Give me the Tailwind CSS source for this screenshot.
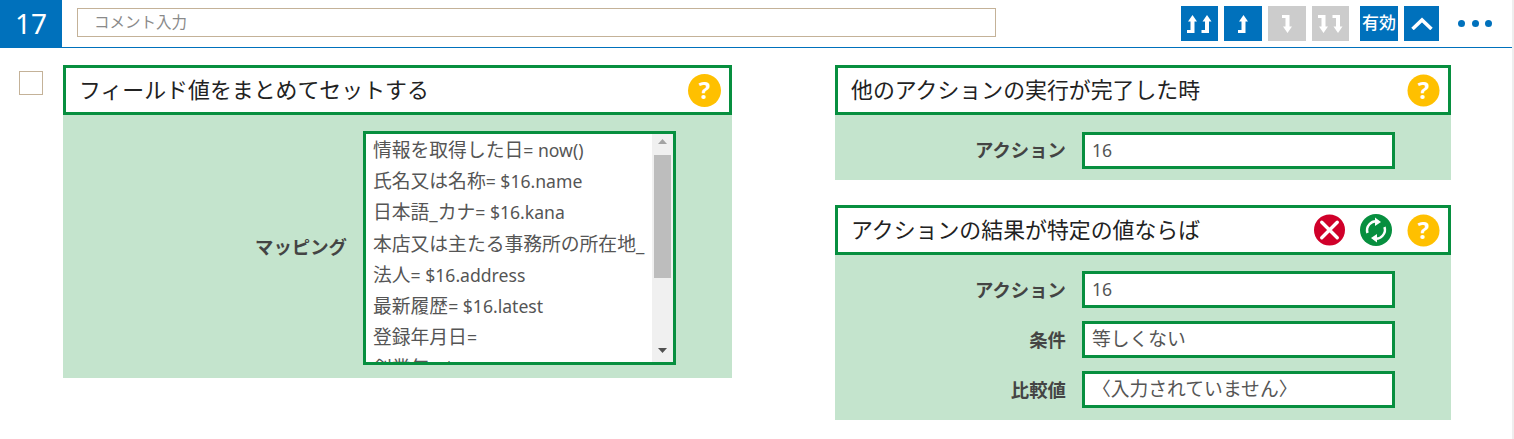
<!DOCTYPE html>
<html lang="ja">
<head>
<meta charset="utf-8">
<script src="https://cdn.jsdelivr.net/npm/@tailwindcss/browser@4"></script>
</head>
<body class="bg-white font-['Noto_Sans','Noto_Sans_CJK_JP',sans-serif] text-[#444] overflow-hidden">
<div class="w-[1514px] h-[439px] border-r-2 border-[#eeeeee]">
  <header class="flex items-start h-[48px] border-b border-[#0071bc]">
    <div class="w-[62px] h-[48px] bg-[#0071bc] text-white text-[28px] leading-[46px] text-center">17</div>
    <div class="mt-[8px] ml-[15px] w-[919px] h-[29px] border border-[#c4b298] pl-4 flex items-center text-[15.500px] text-[#8a8a8a]">コメント入力</div>
    <div class="mt-[6px] ml-[185px] flex items-center gap-[6px]">
      <button class="w-[37px] h-[35px] bg-[#0071bc] flex items-center justify-center">
        <svg width="25" height="18" viewBox="0 0 25 18" fill="white"><path d="M5.500 0 L10 6.500 H7.500 V18 H0 V15 H3.500 V6.500 H1 Z"/><path d="M20 0 L24.500 6.500 H22 V18 H14.500 V15 H18 V6.500 H15.500 Z"/></svg>
      </button>
      <button class="w-[38px] h-[35px] bg-[#0071bc] flex items-center justify-center">
        <svg width="10" height="18" viewBox="0 0 10 18" fill="white"><path d="M5.500 0 L10 6.500 H7.500 V18 H0 V15 H3.500 V6.500 H1 Z"/></svg>
      </button>
      <button class="w-[38px] h-[35px] bg-[#cccccc] flex items-center justify-center">
        <svg width="10" height="18" viewBox="0 0 10 18" fill="white"><path d="M5.500 18 L10 11.500 H7.500 V0 H0 V3 H3.500 V11.500 H1 Z"/></svg>
      </button>
      <button class="w-[37px] h-[35px] bg-[#cccccc] flex items-center justify-center">
        <svg width="25" height="18" viewBox="0 0 25 18" fill="white"><path d="M5.500 18 L10 11.500 H7.500 V0 H0 V3 H3.500 V11.500 H1 Z"/><path d="M20 18 L24.500 11.500 H22 V0 H14.500 V3 H18 V11.500 H15.500 Z"/></svg>
      </button>
      <button class="ml-[5px] w-[38px] h-[35px] pb-[1px] bg-[#0071bc] text-white text-[17px] font-medium text-center whitespace-nowrap">有効</button>
      <button class="w-[35px] h-[35px] bg-[#0071bc] flex items-center justify-center">
        <svg width="22" height="13" viewBox="0 0 22 13" fill="none" stroke="white" stroke-width="3.500"><path d="M1.500 12 L11 3 L20.500 12"/></svg>
      </button>
      <div class="ml-[19px] -translate-x-[6px] flex gap-[6.500px]">
        <span class="w-[7px] h-[7px] rounded-full bg-[#0071bc]"></span>
        <span class="w-[7px] h-[7px] rounded-full bg-[#0071bc]"></span>
        <span class="w-[7px] h-[7px] rounded-full bg-[#0071bc]"></span>
      </div>
    </div>
  </header>

  <main class="flex items-start pt-[17px]">
    <div class="ml-[19px] mt-[6px] w-[24px] h-[24px] border border-[#c4b298]"></div>
    <section class="ml-[20px] w-[669px] bg-[#c4e4cd]">
      <div class="h-[50px] bg-white border-[3px] border-[#078f3f] flex items-center justify-between pl-[13px] pr-[8px] text-[21.900px] text-[#222]">
        <span>フィールド値をまとめてセットする</span>
        <svg width="33" height="33" viewBox="0 0 33 33"><circle cx="16.500" cy="16.500" r="16.500" fill="#ffc000"/><text x="16.500" y="25" text-anchor="middle" fill="white" font-size="24" font-weight="700">?</text></svg>
      </div>
      <div class="flex items-start h-[263px] pt-[16px]">
        <div class="w-[284px] mt-[102px] text-right text-[18.400px] font-bold">マッピング</div>
        <div class="ml-[16px] w-[313px] h-[234px] border-[3px] border-[#078f3f] bg-white flex">
          <div class="flex-1 overflow-hidden pl-[7px] pt-[1px] text-[18.800px] leading-[31.200px] whitespace-nowrap text-[#555]">
            <div>情報を取得した日<span class="text-[17.600px]">= now()</span></div>
            <div>氏名又は名称<span class="text-[17.600px]">= $16.name</span></div>
            <div>日本語_カナ<span class="text-[17.600px]">= $16.kana</span></div>
            <div>本店又は主たる事務所の所在地_</div>
            <div>法人<span class="text-[17.600px]">= $16.address</span></div>
            <div>最新履歴<span class="text-[17.600px]">= $16.latest</span></div>
            <div>登録年月日<span class="text-[17.600px]">=</span></div>
            <div>創業年<span class="text-[17.600px]">= $16.year</span></div>
          </div>
          <div class="w-[21px] bg-[#f0f0f0] flex flex-col items-center justify-between pt-[5px] pb-[9px]">
            <svg width="9" height="5" viewBox="0 0 9 5"><path d="M4.500 0 L9 5 H0 Z" fill="#a3a3a3"/></svg>
            <div class="absolute mt-[16px] w-[17px] h-[123px] bg-[#bdbdbd]"></div>
            <svg width="9" height="5" viewBox="0 0 9 5"><path d="M0 0 H9 L4.500 5 Z" fill="#505050"/></svg>
          </div>
        </div>
      </div>
    </section>

    <div class="ml-[103px] w-[616px] flex flex-col gap-[25px]">
      <section class="bg-[#c4e4cd]">
        <div class="h-[50px] bg-white border-[3px] border-[#078f3f] flex items-center justify-between pl-[13px] pr-[8px] text-[21.900px] text-[#222]">
          <span>他のアクションの実行が完了した時</span>
          <svg width="33" height="33" viewBox="0 0 33 33"><circle cx="16.500" cy="16.500" r="16" fill="#ffc000"/><text x="16.500" y="25" text-anchor="middle" fill="white" font-size="24" font-weight="700">?</text></svg>
        </div>
        <div class="flex items-center h-[65px] pt-[5px]">
          <div class="w-[231px] text-right text-[18.400px] font-bold">アクション</div>
          <div class="ml-[16px] w-[313px] h-[37px] border-[3px] border-[#078f3f] bg-white flex items-center pl-[7px] text-[17.600px] text-[#555]">16</div>
        </div>
      </section>
      <section class="bg-[#c4e4cd]">
        <div class="h-[50px] bg-white border-[3px] border-[#078f3f] flex items-center justify-between pl-[13px] pr-[8px] text-[21.900px] text-[#222]">
          <span>アクションの結果が特定の値ならば</span>
          <div class="flex items-center gap-[15px]">
            <svg width="31" height="32" viewBox="0 0 32 33"><circle cx="16" cy="16.500" r="16" fill="#d0002a"/><path d="M8 8.500 L24 24.500 M24 8.500 L8 24.500" stroke="white" stroke-width="3.500" stroke-linecap="round"/></svg>
            <svg width="32" height="32" viewBox="0 0 32 32"><circle cx="16" cy="16" r="16" fill="#078f3f"/><path d="M7.500 19 A9 9 0 0 1 18 7.500 M24.500 13 A9 9 0 0 1 14 24.500" fill="none" stroke="white" stroke-width="2.500"/><path d="M15 3.500 L21 8 L15 12 Z M17 28.500 L11 24 L17 20 Z" fill="white"/></svg>
            <svg width="33" height="33" viewBox="0 0 33 33"><circle cx="16.500" cy="16.500" r="16" fill="#ffc000"/><text x="16.500" y="25" text-anchor="middle" fill="white" font-size="24" font-weight="700">?</text></svg>
          </div>
        </div>
        <div class="flex flex-col gap-[13px] pt-[16px] pb-[12px]">
          <div class="flex items-center">
            <div class="w-[231px] text-right text-[18.400px] font-bold">アクション</div>
            <div class="ml-[16px] w-[313px] h-[37px] border-[3px] border-[#078f3f] bg-white flex items-center pl-[7px] text-[17.600px] text-[#555]">16</div>
          </div>
          <div class="flex items-center">
            <div class="w-[231px] text-right text-[18.400px] font-bold">条件</div>
            <div class="ml-[16px] w-[313px] h-[37px] border-[3px] border-[#078f3f] bg-white flex items-center pl-[7px] text-[18.800px] text-[#555]">等しくない</div>
          </div>
          <div class="flex items-center">
            <div class="w-[231px] text-right text-[18.400px] font-bold">比較値</div>
            <div class="ml-[16px] w-[313px] h-[37px] border-[3px] border-[#078f3f] bg-white flex items-center pl-[7px] text-[18.800px] text-[#555]">〈入力されていません〉</div>
          </div>
        </div>
      </section>
    </div>
  </main>
</div>
</body>
</html>
